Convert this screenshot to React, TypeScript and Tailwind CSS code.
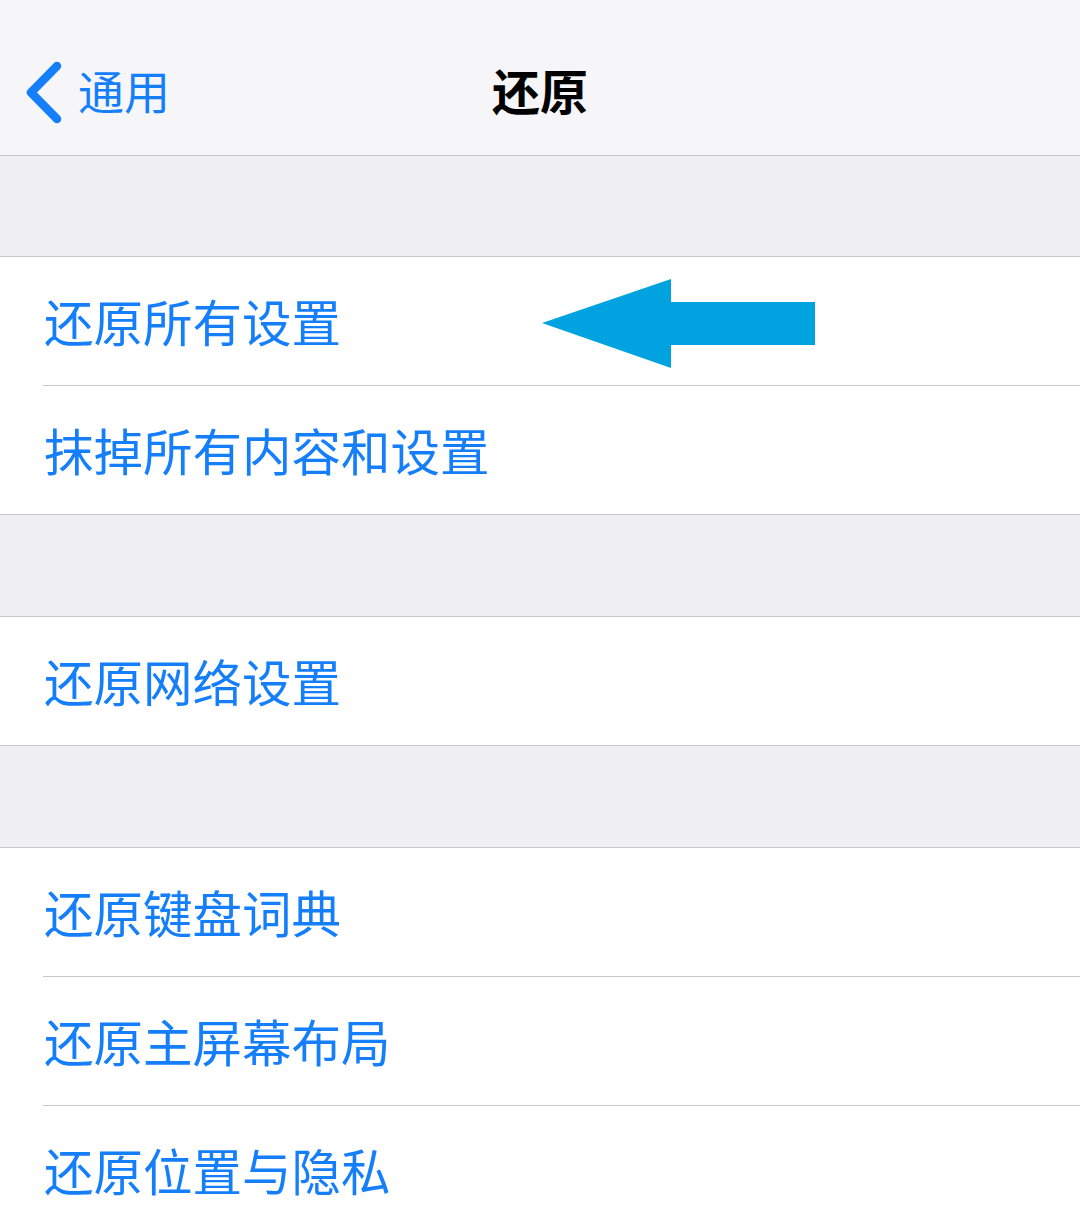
const groups = [
  ['还原所有设置', '抹掉所有内容和设置'],
  ['还原网络设置'],
  ['还原键盘词典', '还原主屏幕布局', '还原位置与隐私'],
];

const font = { fontFamily: '"Noto Sans CJK SC", "Noto Sans", sans-serif' };

export default function App() {
  return (
    <div className="h-[1227px] w-[1080px] overflow-hidden bg-[#efeff4]" style={font}>
      <div className="grid h-[156px] grid-cols-[1fr_auto_1fr] items-center border-b border-[#c8c7cc] bg-[#f6f6f8] pt-[22px]">
        <div className="flex items-center gap-[14px] pl-[22px] text-[#157efb]">
          <svg className="mt-[8px]" width="42" height="64" viewBox="0 0 42 64" fill="none">
            <path d="M35 5 L9 31.5 L35 58" stroke="#157efb" strokeWidth="8.5" strokeLinecap="round" strokeLinejoin="round" />
          </svg>
          <span className="text-[46px] leading-none">通用</span>
        </div>
        <div className="text-[48px] font-bold leading-none text-black">还原</div>
        <div />
      </div>

      {groups.map((rows, gi) => (
        <div key={gi} className={`${gi === 0 ? 'mt-[100px]' : 'mt-[101px]'} border-y border-[#c8c7cc] bg-white`}>
          {rows.map((label, ri) => (
            <div key={label} className="relative">
              {ri > 0 && <div className="ml-[43px] h-px bg-[#c8c7cc]" />}
              <div className="flex h-[128px] items-center pl-[44px] text-[49.5px] leading-none text-[#157efb]">
                {label}
              </div>
              {gi === 0 && ri === 0 && (
                <svg className="absolute left-[542px] top-[22px]" width="274" height="90" viewBox="0 0 274 90">
                  <polygon points="0,44 129,0 129,23 273,23 273,66 129,66 129,89" fill="#00a3e0" />
                </svg>
              )}
            </div>
          ))}
        </div>
      ))}
    </div>
  );
}
